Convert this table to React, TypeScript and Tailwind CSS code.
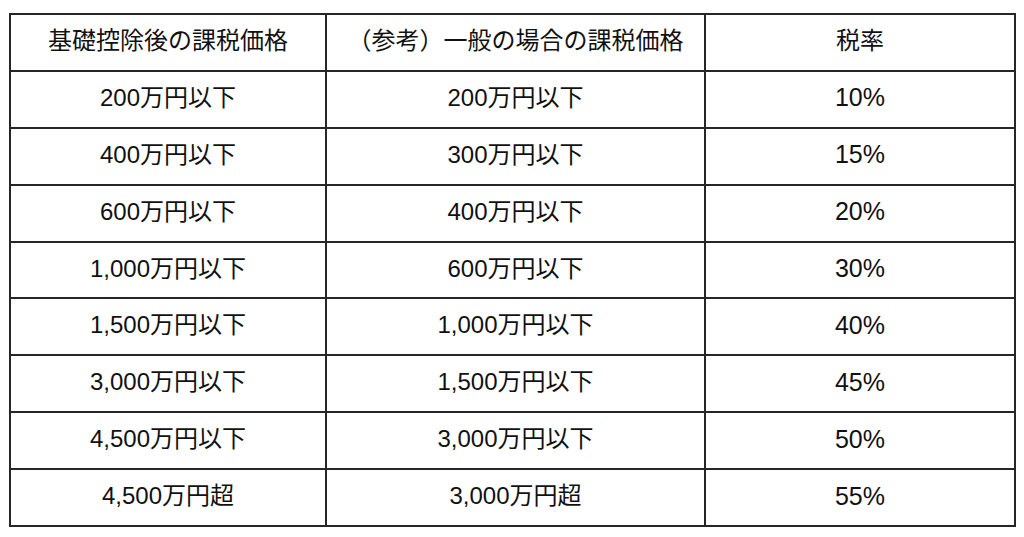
import React from 'react';

const rows: [string, string, string][] = [
  ['200万円以下', '200万円以下', '10%'],
  ['400万円以下', '300万円以下', '15%'],
  ['600万円以下', '400万円以下', '20%'],
  ['1,000万円以下', '600万円以下', '30%'],
  ['1,500万円以下', '1,000万円以下', '40%'],
  ['3,000万円以下', '1,500万円以下', '45%'],
  ['4,500万円以下', '3,000万円以下', '50%'],
  ['4,500万円超', '3,000万円超', '55%'],
];

const cell = 'border-2 border-[#262626] text-center align-middle h-[56.9px] p-0 pb-[3px]';

const App: React.FC = () => {
  return (
    <div
      className="w-[1024px] h-[537px] bg-white pt-[13px] pl-[9px] text-[#111]"
      style={{ fontFamily: '"Liberation Sans", "Noto Sans CJK JP", sans-serif' }}
    >
      <table className="border-collapse table-fixed w-[1005px] text-[24px] leading-none">
        <colgroup>
          <col className="w-[316px]" />
          <col className="w-[379px]" />
          <col className="w-[310px]" />
        </colgroup>
        <thead>
          <tr>
            <th className={`${cell} font-normal`}>基礎控除後の課税価格</th>
            <th className={`${cell} font-normal`}>（参考）一般の場合の課税価格</th>
            <th className={`${cell} font-normal`}>税率</th>
          </tr>
        </thead>
        <tbody>
          {rows.map((r, i) => (
            <tr key={i}>
              <td className={cell}>{r[0]}</td>
              <td className={cell}>{r[1]}</td>
              <td className={`${cell} text-[25px]`}>{r[2]}</td>
            </tr>
          ))}
        </tbody>
      </table>
    </div>
  );
};

export default App;
